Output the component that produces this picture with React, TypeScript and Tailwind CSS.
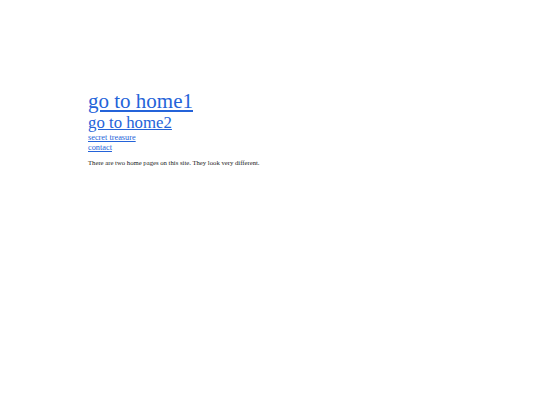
export default function App() {
  return (
    <div
      className="min-h-[405px] w-full bg-white pl-[88px] pt-[89px]"
      style={{ fontFamily: '"Liberation Serif", "Times New Roman", serif' }}
    >
      <div className="flex flex-col items-start">
        <a href="#" className="block text-[21px] leading-[25.4px] text-[#2463d9] underline">
          go to home1
        </a>
        <a href="#" className="block text-[16.8px] leading-[18.2px] text-[#2463d9] underline">
          go to home2
        </a>
        <a href="#" className="block text-[8.3px] leading-[10.5px] text-[#2463d9] underline">
          secret treasure
        </a>
        <a href="#" className="block text-[8.3px] leading-[10.5px] text-[#2463d9] underline">
          contact
        </a>
        <p className="mt-[5px] text-[6.7px] leading-[8px] text-[#222222]">
          There are two home pages on this site. They look very different.
        </p>
      </div>
    </div>
  );
}
